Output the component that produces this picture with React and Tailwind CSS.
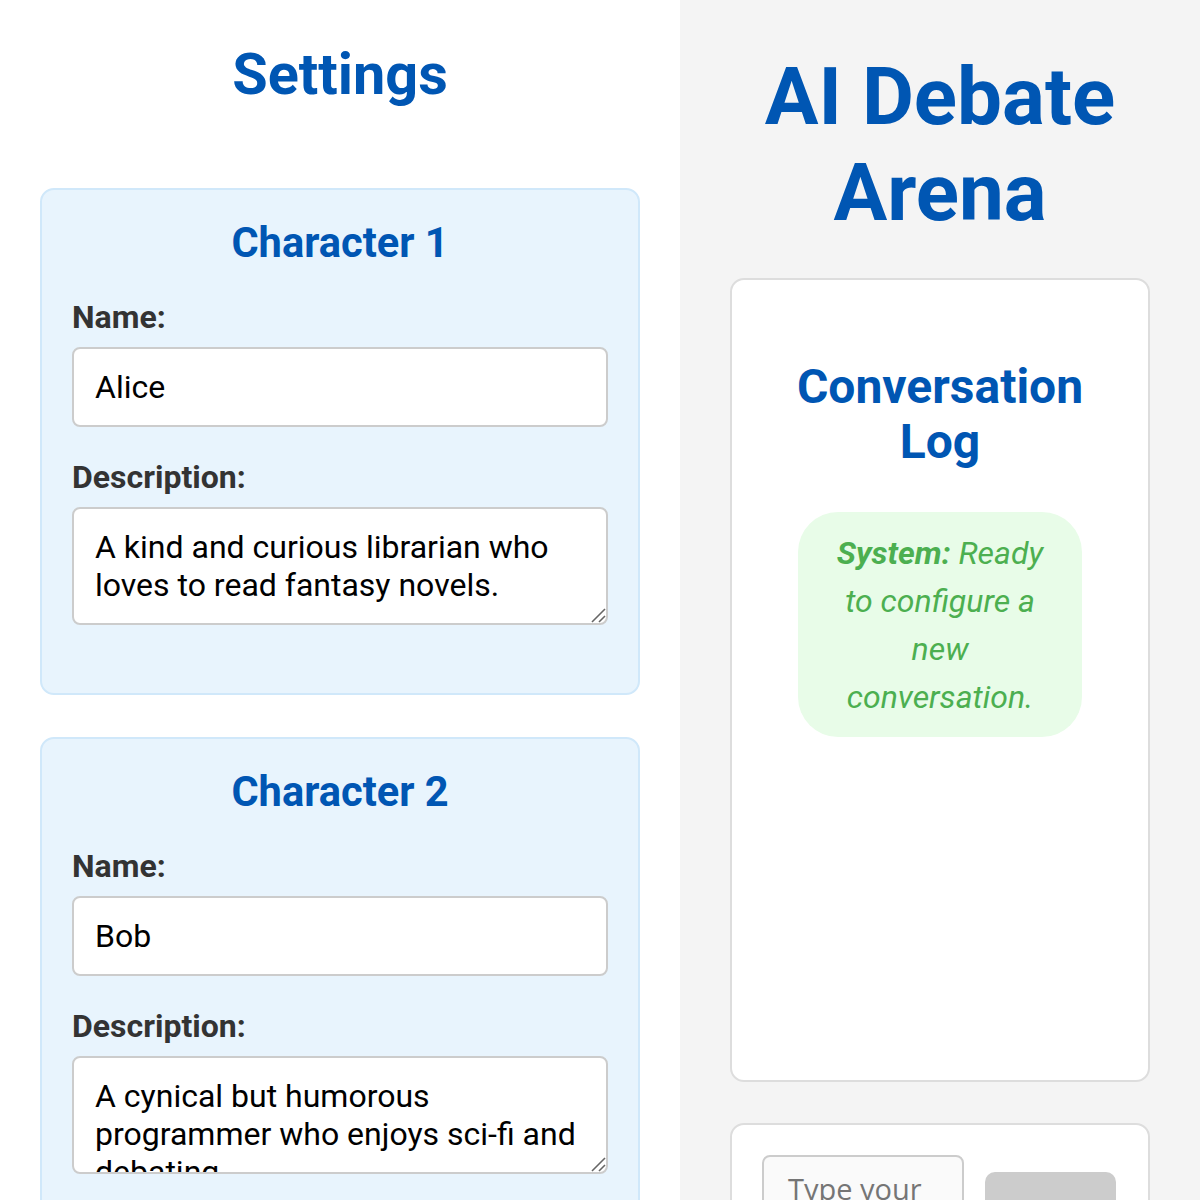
import React from "react";

const font = { fontFamily: "Roboto, 'Liberation Sans', sans-serif" };

const ResizeGrip = () => (
  <svg className="absolute right-[2px] bottom-[2px] pointer-events-none" width="17" height="17" viewBox="0 0 17 17">
    <line x1="3" y1="16" x2="16" y2="3" stroke="#666" strokeWidth="1.6" />
    <line x1="10" y1="16" x2="16" y2="10" stroke="#666" strokeWidth="1.6" />
  </svg>
);

const CharacterCard = ({ title, name, description }) => {
  return (
    <div className="w-[600px] bg-[#e8f4fd] border-2 border-[#d0e8fa] rounded-[14px] px-[30px] pt-[28px] pb-[68px]">
      <h3 className="text-center text-[41.6px] leading-[50px] font-bold text-[#0056b3]">{title}</h3>
      <label className="block mt-[30px] text-[32px] leading-[38px] font-bold text-[#333]">Name:</label>
      <input
        type="text"
        defaultValue={name}
        className="block mt-[11px] w-full h-[80px] px-[21px] text-[32px] leading-[38px] text-black bg-white border-2 border-[#ccc] rounded-[8px] outline-none"
      />
      <label className="block mt-[31px] text-[32px] leading-[38px] font-bold text-[#333]">Description:</label>
      <div className="relative mt-[11px]">
        <textarea
          defaultValue={description}
          className="block w-full h-[118px] px-[21px] py-[19px] text-[32px] leading-[38px] text-black bg-white border-2 border-[#ccc] rounded-[8px] outline-none overflow-hidden resize-none"
        />
        <ResizeGrip />
      </div>
    </div>
  );
};

export default function App() {
  return (
    <div className="flex w-full min-h-[1200px]" style={font}>
      <div className="w-[680px] shrink-0 bg-white px-[40px] pt-[40px]">
        <h2 className="text-center text-[57.6px] leading-[69px] font-bold text-[#0056b3]">Settings</h2>
        <div className="mt-[79px] flex flex-col gap-[42px]">
          <CharacterCard
            title="Character 1"
            name="Alice"
            description="A kind and curious librarian who loves to read fantasy novels."
          />
          <CharacterCard
            title="Character 2"
            name="Bob"
            description="A cynical but humorous programmer who enjoys sci-fi and debating."
          />
        </div>
      </div>

      <div className="w-[520px] min-w-0 shrink-0 bg-[#f4f4f4] px-[50px] pt-[49px]">
        <h1 className="text-center text-[80px] leading-[96px] font-bold text-[#0056b3]">AI Debate Arena</h1>

        <div className="mt-[37px] h-[804px] bg-white border-2 border-[#ddd] rounded-[14px] px-[30px] pt-[79px]">
          <h2 className="text-center text-[48px] leading-[55px] font-bold text-[#0056b3]">Conversation Log</h2>
          <div className="mt-[43px] flex justify-center">
            <div className="max-w-[80%] bg-[#e8fce8] rounded-[40px] px-[30px] py-[16.5px] text-center italic text-[32px] leading-[48px] text-[#4caf50]">
              <span className="font-bold">System:</span> Ready to configure a new conversation.
            </div>
          </div>
        </div>

        <div className="mt-[41px] bg-white border-2 border-[#ddd] rounded-[14px] p-[30px] flex items-center gap-[21px]">
          <textarea
            placeholder="Type your message..."
            className="w-[202px] shrink-0 h-[120px] px-[24px] py-[12px] text-[29px] leading-[40px] bg-[#fafafa] border-2 border-[#ccc] rounded-[8px] outline-none resize-none placeholder:text-[#757575] overflow-hidden"
            style={{ fontFamily: "'Open Sans', 'Noto Sans', sans-serif" }}
          />
          <button
            disabled
            className="w-[131px] h-[86px] bg-[#ccc] text-white text-[30px] rounded-[10px] font-bold"
          >
            Send
          </button>
        </div>
      </div>
    </div>
  );
}
